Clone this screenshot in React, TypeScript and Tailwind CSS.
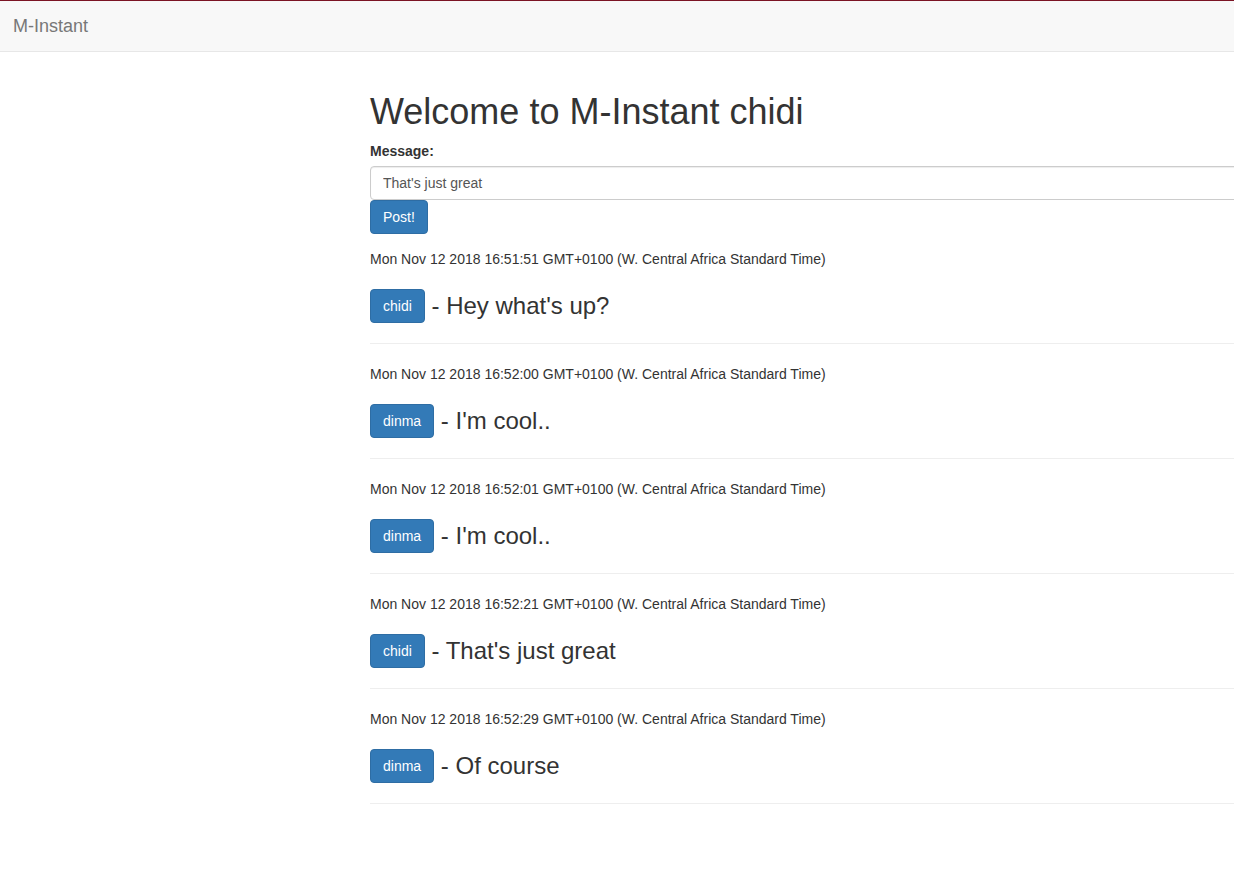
import React from "react";

type Msg = { time: string; user: string; text: string };

const messages: Msg[] = [
  { time: "Mon Nov 12 2018 16:51:51 GMT+0100 (W. Central Africa Standard Time)", user: "chidi", text: "Hey what's up?" },
  { time: "Mon Nov 12 2018 16:52:00 GMT+0100 (W. Central Africa Standard Time)", user: "dinma", text: "I'm cool.." },
  { time: "Mon Nov 12 2018 16:52:01 GMT+0100 (W. Central Africa Standard Time)", user: "dinma", text: "I'm cool.." },
  { time: "Mon Nov 12 2018 16:52:21 GMT+0100 (W. Central Africa Standard Time)", user: "chidi", text: "That's just great" },
  { time: "Mon Nov 12 2018 16:52:29 GMT+0100 (W. Central Africa Standard Time)", user: "dinma", text: "Of course" },
];

export default function App() {
  return (
    <div className="min-h-[869px] overflow-hidden bg-white font-['Liberation_Sans',Arial,sans-serif] text-[14px] leading-[20px] text-[#333]">
      {/* navbar */}
      <nav className="h-[52px] border-t border-b border-t-[#7b1424] border-b-[#e7e7e7] bg-[#f8f8f8]">
        <div className="flex h-[50px] items-center pl-[13px] text-[18px] text-[#777]">M-Instant</div>
      </nav>

      <div className="ml-[370px] w-[1100px] pt-[20px]">
        <h1 className="mt-[20px] mb-[10px] text-[36px] leading-[39px] font-normal">
          Welcome to M-Instant chidi
        </h1>

        <form className="mb-[15px]" onSubmit={(e) => e.preventDefault()}>
          <label className="mb-[5px] block font-bold">Message:</label>
          <input
            type="text"
            defaultValue="That's just great"
            className="block h-[34px] w-full rounded-[4px] border border-[#ccc] bg-white px-[12px] py-[6px] text-[14px] text-[#555] shadow-[inset_0_1px_1px_rgba(0,0,0,0.075)] outline-none"
          />
          <button
            type="submit"
            className="h-[34px] rounded-[4px] border border-[#2e6da4] bg-[#337ab7] px-[12px] text-[14px] text-white"
          >
            Post!
          </button>
        </form>

        {messages.map((m, i) => (
          <div key={i}>
            <div>{m.time}</div>
            <h3 className="mt-[20px] flex items-center text-[24px] leading-[26.4px] font-normal">
              <span className="inline-flex h-[34px] items-center rounded-[4px] border border-[#2e6da4] bg-[#337ab7] px-[12px] text-[14px] text-white">
                {m.user}
              </span>
              <span className="whitespace-pre"> - {m.text}</span>
            </h3>
            <hr className="my-[20px] border-t border-[#eee]" />
          </div>
        ))}
      </div>
    </div>
  );
}
